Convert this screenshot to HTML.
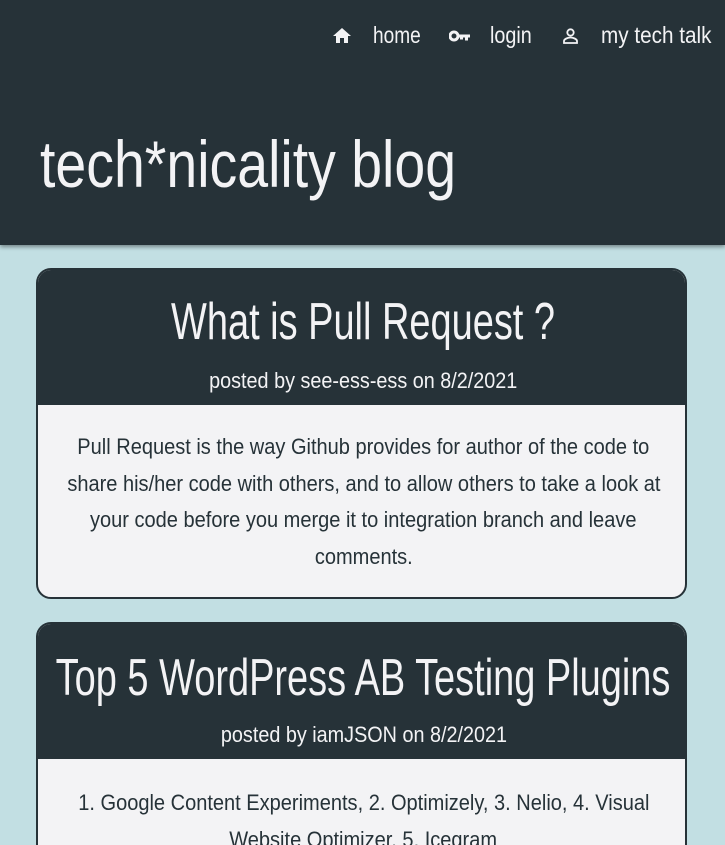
<!DOCTYPE html>
<html style="width:725px;height:845px;overflow:hidden"><head><style>
*{margin:0;padding:0;box-sizing:border-box}
body{width:725px;height:845px;overflow:hidden;background:#c2dfe3;font-family:"Liberation Sans",sans-serif;position:relative}
.hdr{position:absolute;left:0;top:0;width:725px;height:245px;background:#263238;box-shadow:0 2px 4px rgba(0,0,0,.4)}
.t{position:absolute;white-space:nowrap;color:#f3f3f5;transform-origin:0 0}
.c{position:absolute;left:-300px;width:1251px;text-align:center;white-space:nowrap}
.c span{display:inline-block}
.card{position:absolute;left:36px;width:651px;border:2px solid #263238;border-radius:15px;overflow:hidden;background:#f3f3f5}
.ch{position:absolute;left:0;top:0;width:100%;background:#263238}
.w{color:#f3f3f5}
.d{color:#263238}
</style></head><body>
<div class="hdr">
  <svg style="position:absolute;left:333px;top:28px" width="18" height="16" viewBox="0 0 18 16"><path d="M9 0L0 8h3v7h4v-5h4v5h4V8h3z" fill="#f3f3f5"/></svg>
  <div class="t" style="left:373px;top:22px;font-size:23px;transform:scaleX(.83)">home</div>
  <svg style="position:absolute;left:449px;top:30px" width="22" height="12" viewBox="0 0 22 12"><circle cx="5" cy="6" r="4" fill="none" stroke="#f3f3f5" stroke-width="3"/><path d="M9 4.5h12v3h-2v3h-3v-3h-2v2h-3v-2h-2z" fill="#f3f3f5"/></svg>
  <div class="t" style="left:490px;top:22px;font-size:23px;transform:scaleX(.86)">login</div>
  <svg style="position:absolute;left:563px;top:28px" width="15" height="16" viewBox="0 0 15 16"><circle cx="7.5" cy="4.5" r="3.2" fill="none" stroke="#f3f3f5" stroke-width="1.8"/><path d="M1 15v-2c0-2 4-3.5 6.5-3.5S14 11 14 13v2z" fill="none" stroke="#f3f3f5" stroke-width="1.8"/></svg>
  <div class="t" style="left:601px;top:22px;font-size:23px;transform:scaleX(.9)">my tech talk</div>
  <div class="t" style="left:40px;top:126px;font-size:66px;transform:scaleX(.84)">tech*nicality blog</div>
</div>

<div class="card" style="top:268px;height:331px">
  <div class="ch" style="height:135px">
    <div class="c w" style="top:22px;font-size:52px"><span style="transform:scaleX(.73)">What is Pull Request ?</span></div>
    <div class="c w" style="top:98px;font-size:22px"><span style="transform:scaleX(.9)">posted by see-ess-ess on 8/2/2021</span></div>
  </div>
  <div class="c d" style="top:159px;font-size:22px;line-height:36.5px"><span style="transform:scaleX(.91)">Pull Request is the way Github provides for author of the code to</span><br><span style="transform:scaleX(.91)">share his/her code with others, and to allow others to take a look at</span><br><span style="transform:scaleX(.91)">your code before you merge it to integration branch and leave</span><br><span style="transform:scaleX(.91)">comments.</span></div>
</div>

<div class="card" style="top:622px;height:260px">
  <div class="ch" style="height:135px">
    <div class="c w" style="top:24px;font-size:52px"><span style="transform:scaleX(.73)">Top 5 WordPress AB Testing Plugins</span></div>
    <div class="c w" style="top:98px;font-size:22px"><span style="transform:scaleX(.9)">posted by iamJSON on 8/2/2021</span></div>
  </div>
  <div class="c d" style="top:161px;font-size:22px;line-height:36.5px"><span style="transform:scaleX(.91)">1. Google Content Experiments, 2. Optimizely, 3. Nelio, 4. Visual</span><br><span style="transform:scaleX(.91)">Website Optimizer, 5. Icegram</span></div>
</div>
</body></html>
